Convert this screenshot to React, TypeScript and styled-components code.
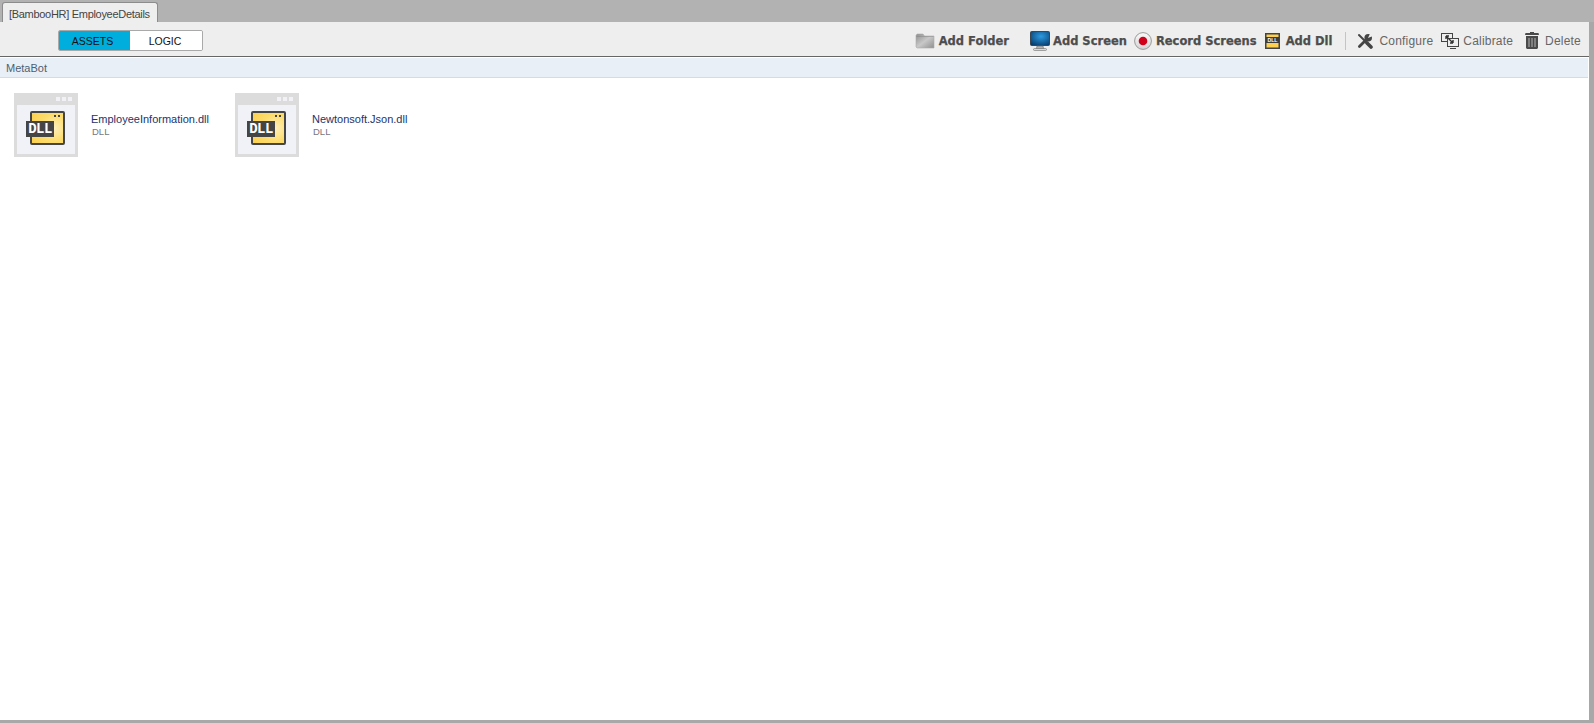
import React from 'react';
import styled, { createGlobalStyle } from 'styled-components';

const GlobalStyle = createGlobalStyle`
  html, body {
    margin: 0;
    padding: 0;
    height: 100%;
    overflow: hidden;
    background: #fff;
    font-family: "Liberation Sans", Arial, sans-serif;
  }
  #root {
    height: 100%;
  }
`;

const Page = styled.div`
  display: flex;
  flex-direction: column;
  width: 1594px;
  height: 723px;
  box-sizing: border-box;
  background: #fff;
  border-right: 5px solid #a8a8a8;
  border-bottom: 3px solid #a8a8a8;
`;

const TabStrip = styled.div`
  display: flex;
  align-items: flex-end;
  flex: none;
  height: 22px;
  padding-left: 2px;
  margin-right: -5px;
  background: #b2b2b2;
`;

const Tab = styled.div`
  display: flex;
  align-items: center;
  box-sizing: border-box;
  width: 156px;
  height: 20px;
  padding: 2px 0 0 6px;
  color: #444;
  font-size: 11px;
  letter-spacing: -0.3px;
  white-space: nowrap;
  background: #eeeeee;
  border: 1px solid #8c8c8c;
  border-bottom: 0;
  border-radius: 3px 3px 0 0;
`;

const Toolbar = styled.div`
  display: flex;
  align-items: center;
  justify-content: space-between;
  flex: none;
  box-sizing: border-box;
  height: 35px;
  padding: 2px 8px 0 58px;
  background: #eeeeee;
  border-bottom: 1px solid #666;
`;

const Toggle = styled.div`
  display: flex;
  box-sizing: border-box;
  width: 145px;
  height: 21px;
  overflow: hidden;
  border: 1px solid #a9a9a9;
  border-radius: 2px;
`;

const ToggleOption = styled.div<{ $active?: boolean }>`
  display: flex;
  align-items: center;
  justify-content: center;
  box-sizing: border-box;
  width: ${p => (p.$active ? '71px' : '72px')};
  padding: 1px ${p => (p.$active ? '4px' : '2px')} 0 0;
  color: #111;
  font-size: 10.5px;
  background: ${p => (p.$active ? '#00aede' : '#fff')};
`;

const Actions = styled.div`
  display: flex;
  align-items: center;
  padding-top: 1px;
`;

const Action = styled.div<{ $gap: number; $after: number }>`
  display: flex;
  align-items: center;
  gap: ${p => p.$gap}px;
  margin-right: ${p => p.$after}px;
  white-space: nowrap;
`;

const StrongLabel = styled.span`
  color: #4d4d4d;
  font-family: "DejaVu Sans", sans-serif;
  font-size: 11.5px;
  font-weight: 700;
  -webkit-text-stroke: 0.25px #4d4d4d;
`;

const PlainLabel = styled.span`
  color: #666;
  font-size: 12px;
  letter-spacing: 0.2px;
`;

const Separator = styled.div`
  width: 1px;
  height: 18px;
  margin-right: 11px;
  background: #c4c4c4;
`;

const PathBar = styled.div`
  display: flex;
  align-items: center;
  flex: none;
  box-sizing: border-box;
  height: 20px;
  margin: 1px 1px 0 0;
  padding-left: 6px;
  color: #4f5f70;
  font-size: 11px;
  background: #e8eff7;
  border-bottom: 1px solid #d3dce6;
`;

const Files = styled.div`
  display: flex;
  flex: 1;
  padding: 15px 0 0 14px;
`;

const FileItem = styled.div`
  display: flex;
  width: 221px;
`;

const FileText = styled.div`
  display: flex;
  flex-direction: column;
  padding: 20px 0 0 13px;
`;

const FileName = styled.div`
  color: #23336b;
  font-size: 11px;
  line-height: 13px;
`;

const FileKind = styled.div`
  padding-left: 1px;
  color: #77777f;
  font-size: 9.5px;
  line-height: 11px;
`;

const Thumb = styled.div`
  position: relative;
  box-sizing: border-box;
  flex: none;
  width: 64px;
  height: 64px;
  padding-top: 12px;
  background: #dcdcdc;
`;

const ThumbInner = styled.div`
  width: 58px;
  height: 49px;
  margin-left: 3px;
  background: #f1f2f8;
`;

const ThumbDots = styled.div`
  position: absolute;
  top: 4px;
  right: 6px;
  display: flex;
  gap: 2px;
`;

const ThumbDot = styled.span`
  width: 4px;
  height: 4px;
  background: #f2f2f6;
`;

const DllSheet = styled.div`
  position: absolute;
  top: 18px;
  left: 16px;
  box-sizing: border-box;
  width: 35px;
  height: 34px;
  background: radial-gradient(circle at 72% 50%, #fff0bd 0%, #fddc6c 50%, #fbd04e 100%);
  border: 2px solid #454545;
  border-radius: 2px;

  &::after {
    content: '';
    position: absolute;
    top: 2px;
    right: 3px;
    width: 2px;
    height: 2px;
    background: #454545;
    box-shadow: -4px 0 0 #454545;
  }
`;

const DllBadge = styled.div`
  position: absolute;
  top: 28px;
  left: 12px;
  display: flex;
  align-items: center;
  justify-content: center;
  width: 28px;
  height: 16px;
  color: #fff;
  font-family: "Liberation Mono", monospace;
  font-size: 14px;
  font-weight: 700;
  letter-spacing: -0.6px;
  background: #454545;
`;

const FolderIcon = () => (
  <svg width="20" height="16" viewBox="0 0 20 16">
    <defs>
      <linearGradient id="folderFill" x1="0" y1="0" x2="1" y2="1">
        <stop offset="0" stopColor="#8e8e8e" />
        <stop offset="0.5" stopColor="#c8c8c8" />
        <stop offset="1" stopColor="#8f8f8f" />
      </linearGradient>
    </defs>
    <path d="M1 2.5 2 1h6l1.5 2H19v12H2L1 14z" fill="url(#folderFill)" stroke="#ababab" strokeWidth="0.6" />
    <path d="M1.5 3.5h17" stroke="#777" strokeWidth="0.6" opacity="0.6" />
  </svg>
);

const ScreenIcon = () => (
  <svg width="20" height="20" viewBox="0 0 20 20">
    <defs>
      <radialGradient id="screenFill" cx="0.55" cy="0.35" r="0.75">
        <stop offset="0" stopColor="#2d9be0" />
        <stop offset="1" stopColor="#063a6b" />
      </radialGradient>
    </defs>
    <rect x="0.5" y="0.5" width="19" height="14" rx="1" fill="url(#screenFill)" stroke="#3c4650" />
    <path d="M7 15h6l.6 3H6.4z" fill="#b5b5b5" stroke="#666" strokeWidth="0.6" />
    <rect x="3.5" y="17.5" width="13" height="2" rx="1" fill="#dadada" stroke="#707070" strokeWidth="0.6" />
  </svg>
);

const RecordIcon = () => (
  <svg width="18" height="18" viewBox="0 0 18 18">
    <defs>
      <linearGradient id="recordRing" x1="0" y1="0" x2="0" y2="1">
        <stop offset="0" stopColor="#fafafa" />
        <stop offset="1" stopColor="#d4d4d4" />
      </linearGradient>
    </defs>
    <circle cx="9" cy="9" r="8.4" fill="url(#recordRing)" stroke="#9a9a9a" />
    <circle cx="9" cy="9" r="4.3" fill="#d0021b" />
  </svg>
);

const DllIcon = () => (
  <svg width="15" height="16" viewBox="0 0 15 16">
    <rect x="0.75" y="0.75" width="13.5" height="14.5" fill="#fdd04f" stroke="#444" strokeWidth="1.5" />
    <rect x="1" y="4" width="13" height="6" fill="#3c3c3c" />
    <text x="7.5" y="9" fill="#fff" fontFamily="Liberation Sans, sans-serif" fontSize="5.2" fontWeight="700" textAnchor="middle">DLL</text>
  </svg>
);

const WrenchIcon = () => (
  <svg width="16" height="16" viewBox="0 0 16 16">
    <path d="M2 2l9 9" stroke="#444" strokeWidth="2" strokeLinecap="round" />
    <path d="M10 10l4 4" stroke="#444" strokeWidth="3.6" strokeLinecap="round" />
    <path d="M2.4 13.6 9.5 6.5" stroke="#444" strokeWidth="2.8" strokeLinecap="round" />
    <circle cx="11.2" cy="4.8" r="3.8" fill="#444" />
    <path d="M11 4.9 13.2 0.2 16 0v3z" fill="#eee" />
  </svg>
);

const CalibrateIcon = () => (
  <svg width="18" height="16" viewBox="0 0 18 16">
    <rect x="0.5" y="0.5" width="11" height="8" fill="#eee" stroke="#444" />
    <rect x="6.5" y="5.5" width="11" height="8" fill="#eee" stroke="#444" />
    <path d="M5 3l7 7M5 3h3M5 3v3M12 10H9M12 10V7" stroke="#333" strokeWidth="1.4" fill="none" />
    <path d="M9 15.5h6" stroke="#444" />
  </svg>
);

const TrashIcon = () => (
  <svg width="14" height="17" viewBox="0 0 14 17">
    <path d="M5 0h4v1h4.5l.5 2H0l.5-2H5z" fill="#4a4a4a" />
    <path d="M1 4h12v12l-1 1H2l-1-1z" fill="#4a4a4a" />
    <path d="M4 6v9M7 6v9M10 6v9" stroke="#b5b5b5" strokeWidth="1" />
  </svg>
);

const files = [
  { name: 'EmployeeInformation.dll', kind: 'DLL' },
  { name: 'Newtonsoft.Json.dll', kind: 'DLL' },
];

export default function App() {
  return (
    <>
      <GlobalStyle />
      <Page>
        <TabStrip>
          <Tab>[BambooHR] EmployeeDetails</Tab>
        </TabStrip>
        <Toolbar>
          <Toggle>
            <ToggleOption $active>ASSETS</ToggleOption>
            <ToggleOption>LOGIC</ToggleOption>
          </Toggle>
          <Actions>
            <Action $gap={4} $after={21}><FolderIcon /><StrongLabel>Add Folder</StrongLabel></Action>
            <Action $gap={3} $after={7}><ScreenIcon /><StrongLabel>Add Screen</StrongLabel></Action>
            <Action $gap={4} $after={8}><RecordIcon /><StrongLabel>Record Screens</StrongLabel></Action>
            <Action $gap={6} $after={13}><DllIcon /><StrongLabel>Add Dll</StrongLabel></Action>
            <Separator />
            <Action $gap={6} $after={8}><WrenchIcon /><PlainLabel>Configure</PlainLabel></Action>
            <Action $gap={4} $after={12}><CalibrateIcon /><PlainLabel>Calibrate</PlainLabel></Action>
            <Action $gap={6} $after={0}><TrashIcon /><PlainLabel>Delete</PlainLabel></Action>
          </Actions>
        </Toolbar>
        <PathBar>MetaBot</PathBar>
        <Files>
          {files.map(file => (
            <FileItem key={file.name}>
              <Thumb>
                <ThumbDots><ThumbDot /><ThumbDot /><ThumbDot /></ThumbDots>
                <ThumbInner />
                <DllSheet />
                <DllBadge>DLL</DllBadge>
              </Thumb>
              <FileText>
                <FileName>{file.name}</FileName>
                <FileKind>{file.kind}</FileKind>
              </FileText>
            </FileItem>
          ))}
        </Files>
      </Page>
    </>
  );
}
